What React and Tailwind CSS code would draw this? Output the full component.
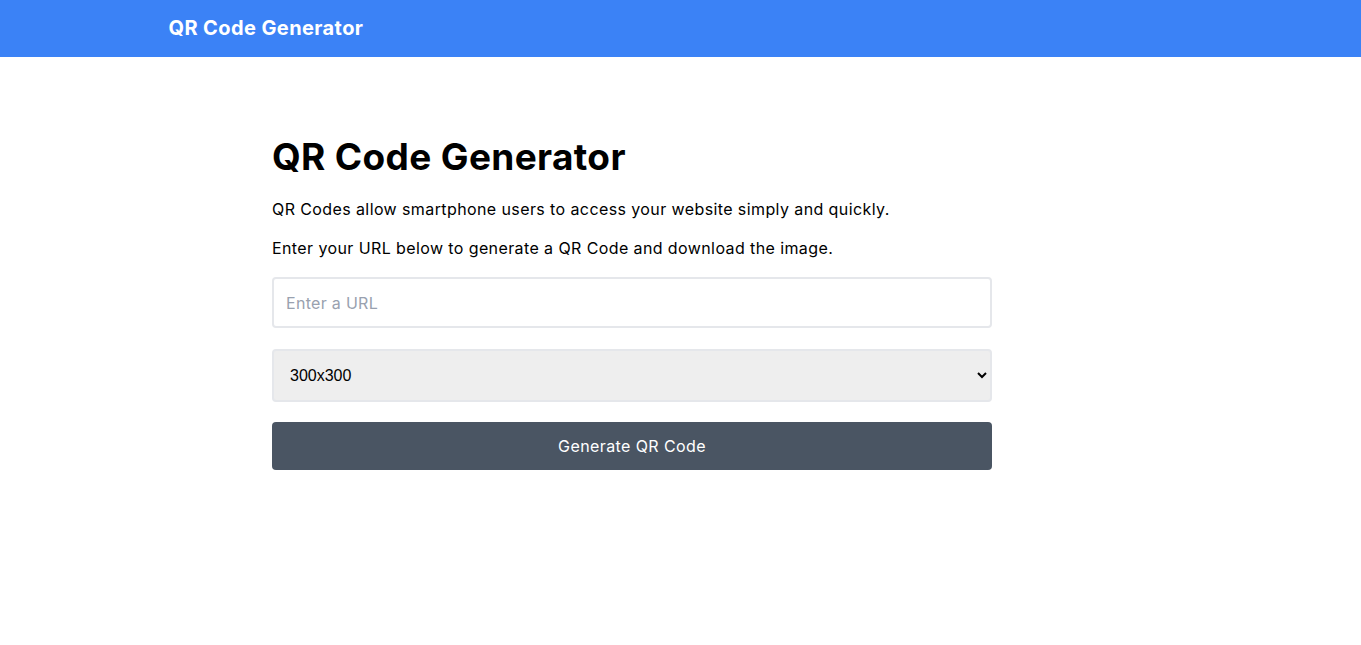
import React from "react";

export default function App() {
  return (
    <div className="min-h-screen bg-white text-black font-['Inter','Open_Sans',sans-serif]">
      <header className="bg-[#3b82f6] h-[57px] flex items-center">
        <div className="w-[1024px] mx-auto">
          <h1 className="text-white text-[20px] font-bold tracking-[0.4px] mb-[2px]">QR Code Generator</h1>
        </div>
      </header>

      <main className="w-[1024px] mx-auto pt-[78px]">
        <div className="ml-[103.5px] w-[720px]">
          <h2 className="text-[37px] font-bold leading-[44px] tracking-[0.35px]">QR Code Generator</h2>
          <p className="mt-[18px] text-[16px] leading-6 tracking-[0.4px]">
            QR Codes allow smartphone users to access your website simply and quickly.
          </p>
          <p className="mt-[15px] text-[16px] leading-6 tracking-[0.4px]">
            Enter your URL below to generate a QR Code and download the image.
          </p>
          <form className="mt-[17px] flex flex-col" onSubmit={(e) => e.preventDefault()}>
            <input
              type="url"
              placeholder="Enter a URL"
              className="w-full h-[51px] border-2 border-gray-200 rounded px-3 text-[16px] tracking-[0.3px] placeholder:text-gray-400 outline-none"
            />
            <select
              defaultValue="300"
              className="mt-[21px] w-full h-[53px] border-2 border-gray-200 rounded bg-[#eeeeee] pl-3 pr-2 text-[16px] font-['Liberation_Sans',Arial,sans-serif] outline-none"
            >
              <option value="100">100x100</option>
              <option value="200">200x200</option>
              <option value="300">300x300</option>
              <option value="400">400x400</option>
            </select>
            <button
              type="submit"
              className="mt-[20px] w-full h-[48px] rounded bg-[#4a5563] text-white text-[16px] tracking-[0.4px]"
            >
              Generate QR Code
            </button>
          </form>
        </div>
      </main>
    </div>
  );
}
